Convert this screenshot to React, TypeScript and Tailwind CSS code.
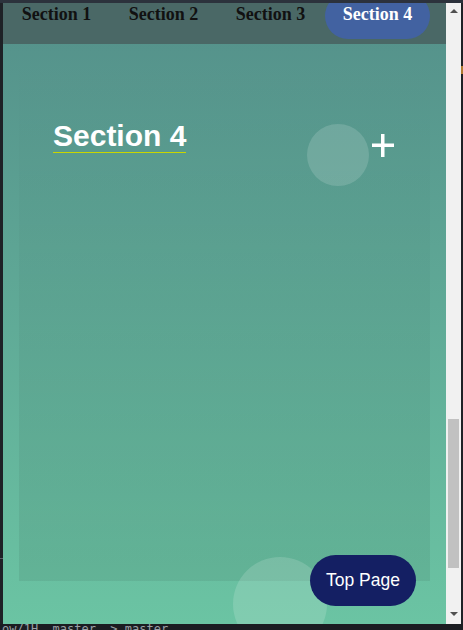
import React from "react";

const serif = { fontFamily: '"Liberation Serif", "Times New Roman", serif' };
const sans = { fontFamily: '"Liberation Sans", Arial, sans-serif' };

export default function App() {
  const items = ["Section 1", "Section 2", "Section 3", "Section 4"];
  return (
    <div className="w-[463px] h-[630px] bg-[#1b1d22] flex flex-col overflow-hidden">
      <div className="h-[3px] bg-[#2c323c]" />
      <div className="flex h-[621px]">
        <div className="w-[3px] bg-[#1e2126] relative">
          <div className="absolute left-0 top-[555px] w-[3px] h-[1px] bg-[#5a5f66]" />
        </div>
        <div className="w-[443px] relative flex flex-col overflow-hidden bg-gradient-to-b from-[#54908a] to-[#6bc4a3]">
          <nav className="h-[41px] bg-[#4a6866] flex items-start shrink-0" style={serif}>
            {items.map((t, i) => (
              <div key={t} className="w-[107px] flex justify-center">
                {i === 3 ? (
                  <div className="w-[105px] h-[46px] -mt-[10px] rounded-full bg-[#4262a1] flex justify-center pt-[10px]">
                    <span className="text-[18px] leading-[22px] font-bold text-white">{t}</span>
                  </div>
                ) : (
                  <span className="text-[18px] leading-[22px] font-bold text-[#111]">{t}</span>
                )}
              </div>
            ))}
          </nav>
          <main className="flex-1 flex flex-col px-4 pb-[43px]">
            <section className="flex-1 relative bg-gradient-to-b from-[rgba(0,0,0,0)] to-[rgba(0,0,0,0.07)]">
              <div className="pl-[34px] pt-[77px]">
                <h2
                  className="inline-block text-[30px] leading-[30px] font-bold text-white pb-[1px] border-b border-[#c9d600]"
                  style={sans}
                >
                  Section 4
                </h2>
              </div>
              <div className="absolute left-[288px] top-[80px] w-[62px] h-[62px] rounded-full bg-white/15" />
              <svg className="absolute left-[353px] top-[90px]" width="22" height="23" viewBox="0 0 22 23">
                <rect x="0" y="9.5" width="22" height="3.5" fill="#fff" />
                <rect x="9" y="0" width="3.5" height="23" fill="#fff" />
              </svg>
            </section>
          </main>
          <div className="absolute left-[230px] top-[554px] w-[94px] h-[94px] rounded-full bg-white/15" />
          <button
            className="absolute left-[307px] top-[552px] w-[106px] h-[51px] rounded-full bg-[#141f63] text-white text-[17.5px]"
            style={sans}
          >
            Top Page
          </button>
        </div>
        <div className="w-[15px] bg-[#f1f1f1] relative">
          <div className="absolute left-[4px] top-[6px] w-0 h-0 border-l-[4px] border-r-[4px] border-b-[4px] border-l-transparent border-r-transparent border-b-[#505050]" />
          <div className="absolute left-[2px] top-[416px] w-[11px] h-[149px] bg-[#c1c1c1]" />
          <div className="absolute left-[4px] top-[609px] w-0 h-0 border-l-[4px] border-r-[4px] border-t-[4px] border-l-transparent border-r-transparent border-t-[#505050]" />
        </div>
        <div className="w-[2px] bg-[#1e2126] relative">
          <div className="absolute left-0 top-[63px] w-[2px] h-[8px] bg-[#b07a30]" />
        </div>
      </div>
      <div className="h-[6px] overflow-hidden bg-[#1b1d22] pl-[2px]">
        <div
          className="text-[12px] leading-[12px] text-[#9aa0a6] -mt-[1px] whitespace-pre"
          style={{ fontFamily: '"DejaVu Sans Mono", monospace' }}
        >
          {"ow/1H  master  > master"}
        </div>
      </div>
    </div>
  );
}
